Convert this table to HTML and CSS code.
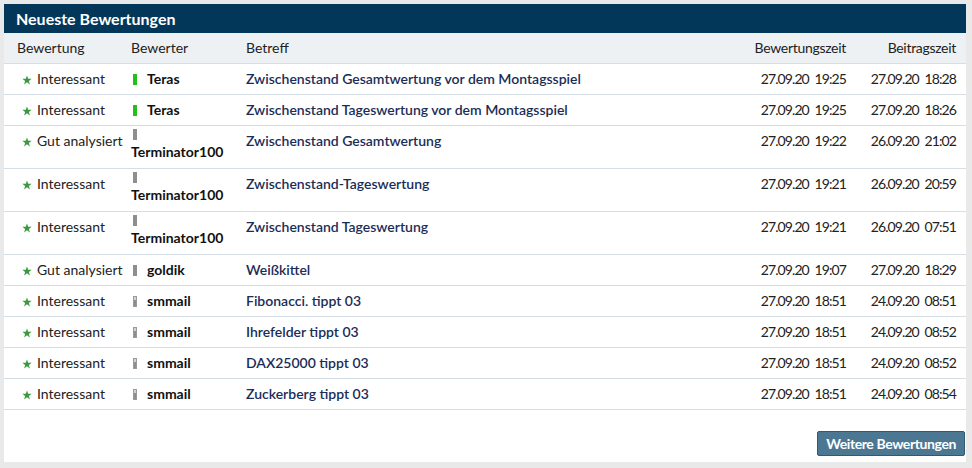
FILE: index.html
```
<!DOCTYPE html>
<html lang="de">
<head>
<meta charset="utf-8">
<title>Neueste Bewertungen</title>
<link rel="stylesheet" href="styles.css">
</head>
<body>
<div class="panel">
  <div class="title">Neueste Bewertungen</div>
  <table class="ratings">
    <colgroup>
      <col class="c-rating"><col class="c-user"><col class="c-subject"><col class="c-rtime"><col class="c-ptime">
    </colgroup>
    <thead>
      <tr><th class="first">Bewertung</th><th>Bewerter</th><th>Betreff</th><th class="num">Bewertungszeit</th><th class="num">Beitragszeit</th></tr>
    </thead>
    <tbody>
      <tr><td class="first"><svg class="star" viewBox="0 0 10 10"><path d="M5 0.4 6.2 3.7 9.7 3.8 6.9 5.9 7.9 9.4 5 7.3 2.1 9.4 3.1 5.9 0.3 3.8 3.8 3.7Z"/></svg>Interessant</td><td><span class="bar green"></span><b class="name">Teras</b></td><td><a href="#">Zwischenstand Gesamtwertung vor dem Montagsspiel</a></td><td class="num">27.09.20 19:25</td><td class="num">27.09.20 18:28</td></tr>
      <tr><td class="first"><svg class="star" viewBox="0 0 10 10"><path d="M5 0.4 6.2 3.7 9.7 3.8 6.9 5.9 7.9 9.4 5 7.3 2.1 9.4 3.1 5.9 0.3 3.8 3.8 3.7Z"/></svg>Interessant</td><td><span class="bar green"></span><b class="name">Teras</b></td><td><a href="#">Zwischenstand Tageswertung vor dem Montagsspiel</a></td><td class="num">27.09.20 19:25</td><td class="num">27.09.20 18:26</td></tr>
      <tr><td class="first"><svg class="star" viewBox="0 0 10 10"><path d="M5 0.4 6.2 3.7 9.7 3.8 6.9 5.9 7.9 9.4 5 7.3 2.1 9.4 3.1 5.9 0.3 3.8 3.8 3.7Z"/></svg>Gut analysiert</td><td class="wrap"><span class="bar grey"></span><b class="name">Terminator100</b></td><td><a href="#">Zwischenstand Gesamtwertung</a></td><td class="num">27.09.20 19:22</td><td class="num">26.09.20 21:02</td></tr>
      <tr><td class="first"><svg class="star" viewBox="0 0 10 10"><path d="M5 0.4 6.2 3.7 9.7 3.8 6.9 5.9 7.9 9.4 5 7.3 2.1 9.4 3.1 5.9 0.3 3.8 3.8 3.7Z"/></svg>Interessant</td><td class="wrap"><span class="bar grey"></span><b class="name">Terminator100</b></td><td><a href="#">Zwischenstand-Tageswertung</a></td><td class="num">27.09.20 19:21</td><td class="num">26.09.20 20:59</td></tr>
      <tr><td class="first"><svg class="star" viewBox="0 0 10 10"><path d="M5 0.4 6.2 3.7 9.7 3.8 6.9 5.9 7.9 9.4 5 7.3 2.1 9.4 3.1 5.9 0.3 3.8 3.8 3.7Z"/></svg>Interessant</td><td class="wrap"><span class="bar grey"></span><b class="name">Terminator100</b></td><td><a href="#">Zwischenstand Tageswertung</a></td><td class="num">27.09.20 19:21</td><td class="num">26.09.20 07:51</td></tr>
      <tr><td class="first"><svg class="star" viewBox="0 0 10 10"><path d="M5 0.4 6.2 3.7 9.7 3.8 6.9 5.9 7.9 9.4 5 7.3 2.1 9.4 3.1 5.9 0.3 3.8 3.8 3.7Z"/></svg>Gut analysiert</td><td><span class="bar grey"></span><b class="name">goldik</b></td><td><a href="#">Weißkittel</a></td><td class="num">27.09.20 19:07</td><td class="num">27.09.20 18:29</td></tr>
      <tr><td class="first"><svg class="star" viewBox="0 0 10 10"><path d="M5 0.4 6.2 3.7 9.7 3.8 6.9 5.9 7.9 9.4 5 7.3 2.1 9.4 3.1 5.9 0.3 3.8 3.8 3.7Z"/></svg>Interessant</td><td><span class="bar part"></span><b class="name">smmail</b></td><td><a href="#">Fibonacci. tippt 03</a></td><td class="num">27.09.20 18:51</td><td class="num">24.09.20 08:51</td></tr>
      <tr><td class="first"><svg class="star" viewBox="0 0 10 10"><path d="M5 0.4 6.2 3.7 9.7 3.8 6.9 5.9 7.9 9.4 5 7.3 2.1 9.4 3.1 5.9 0.3 3.8 3.8 3.7Z"/></svg>Interessant</td><td><span class="bar part"></span><b class="name">smmail</b></td><td><a href="#">Ihrefelder tippt 03</a></td><td class="num">27.09.20 18:51</td><td class="num">24.09.20 08:52</td></tr>
      <tr><td class="first"><svg class="star" viewBox="0 0 10 10"><path d="M5 0.4 6.2 3.7 9.7 3.8 6.9 5.9 7.9 9.4 5 7.3 2.1 9.4 3.1 5.9 0.3 3.8 3.8 3.7Z"/></svg>Interessant</td><td><span class="bar part"></span><b class="name">smmail</b></td><td><a href="#">DAX25000 tippt 03</a></td><td class="num">27.09.20 18:51</td><td class="num">24.09.20 08:52</td></tr>
      <tr><td class="first"><svg class="star" viewBox="0 0 10 10"><path d="M5 0.4 6.2 3.7 9.7 3.8 6.9 5.9 7.9 9.4 5 7.3 2.1 9.4 3.1 5.9 0.3 3.8 3.8 3.7Z"/></svg>Interessant</td><td><span class="bar part"></span><b class="name">smmail</b></td><td><a href="#">Zuckerberg tippt 03</a></td><td class="num">27.09.20 18:51</td><td class="num">24.09.20 08:54</td></tr>
    </tbody>
  </table>
  <div class="actions"><button class="more" type="button">Weitere Bewertungen</button></div>
</div>
</body>
</html>
```
FILE: styles.css
```
html, body {
  margin: 0;
  padding: 0;
}
body {
  background: #e9e9e9;
  font-family: Lato, "Noto Sans", "Liberation Sans", sans-serif;
  font-size: 14px;
  color: #222;
  padding: 4px 6px 6px 4px;
}
.panel {
  background: #fff;
  height: 458px;
  box-sizing: border-box;
}
.title {
  background: #03375a;
  color: #fff;
  font-weight: 700;
  font-size: 16px;
  line-height: 29px;
  height: 29px;
  padding-left: 12px;
}
.ratings {
  width: 100%;
  border-collapse: collapse;
  table-layout: fixed;
}
.c-rating { width: 127px; }
.c-user { width: 115px; }
.c-rtime { width: 130px; }
.c-ptime { width: 110px; }
.ratings th {
  background: #eef1f4;
  font-weight: 400;
  text-align: left;
  line-height: 16px;
  padding: 7px 0 7px 0;
  border-bottom: 1px solid #d5dde6;
  color: #222;
}
.ratings th.num { letter-spacing: -0.3px; }
.ratings td {
  line-height: 16px;
  padding: 7px 0 7px 0;
  vertical-align: top;
  border-bottom: 1px solid #d5dde6;
  white-space: nowrap;
}
.ratings tbody td { padding-bottom: 7px; height: 16px; }
.ratings tbody tr { height: 31px; }
.ratings th.first { padding-left: 13px; }
.ratings td.first { padding-left: 18px; }
.ratings .num {
  text-align: right;
  padding-right: 10px;
}
.ratings td.num { letter-spacing: -0.9px; word-spacing: 3px; }
.star {
  width: 10px;
  height: 10px;
  fill: #3b9a3f;
  margin-right: 5px;
  vertical-align: -1px;
}
.bar {
  display: inline-block;
  width: 4px;
  height: 11px;
  margin-left: 2px;
  margin-right: 10px;
  vertical-align: -1px;
}
.bar.green { background: #22c01e; }
.bar.grey { background: #8e8e8e; }
.bar.part {
  background: linear-gradient(#d2d2d2 0 4px, #8e8e8e 4px);
  box-shadow: inset 0 0 0 1px #9a9a9a;
}
.name {
  font-weight: 700;
  color: #111;
}
.ratings td.wrap { padding-top: 3px; padding-bottom: 8px; }
.wrap .bar { display: block; margin-bottom: 4px; }
.wrap .name { display: block; }
.ratings a {
  color: #1a2d57;
  font-weight: 600;
  text-decoration: none;
}
.actions {
  display: flex;
  justify-content: flex-end;
  padding: 21px 1px 0 0;
}
.more {
  font-family: inherit;
  font-size: 14px;
  font-weight: 700;
  letter-spacing: -0.4px;
  color: #fff;
  background: #4c7793;
  border: 1px solid #2f5a74;
  border-radius: 2px;
  height: 25px;
  padding: 0 8px;
  line-height: 23px;
}
```
